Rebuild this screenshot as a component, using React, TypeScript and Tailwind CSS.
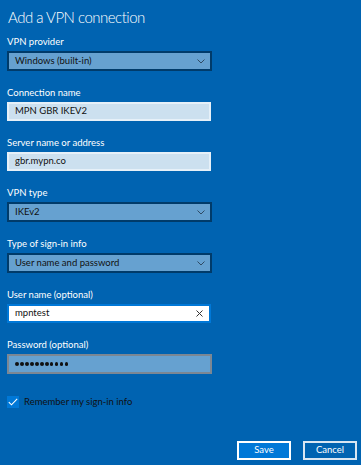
import React from 'react';

const font = { fontFamily: 'Lato, "Noto Sans", sans-serif' };

function Chevron() {
  return (
    <svg width="8" height="5" viewBox="0 0 8 5" className="text-[#2f4a63]">
      <path d="M0.5 0.5L4 4L7.5 0.5" fill="none" stroke="currentColor" strokeWidth="1" />
    </svg>
  );
}

function Label({ children }: { children: React.ReactNode }) {
  return <div className="text-[9.5px] leading-[14px] text-white mb-[2px]">{children}</div>;
}

function Select({ value }: { value: string }) {
  return (
    <div className="w-[205px] h-[20px] flex items-center justify-between pl-[6px] pr-[5px] bg-[#66a1d0] border-2 border-[#003b6a] text-[9.5px] text-[#111]">
      <span>{value}</span>
      <Chevron />
    </div>
  );
}

function TextBox({ value }: { value: string }) {
  return (
    <div className="w-[204px] h-[19px] flex items-center pl-[6px] bg-[#cce0ef] border-2 border-[#e6f0f8] text-[9.5px] text-[#111]">
      {value}
    </div>
  );
}

export default function App() {
  return (
    <div className="w-[361px] h-[465px] bg-[#0063b1] flex flex-col pl-[7px] pr-[4px]" style={font}>
      <h1 className="text-[15px] tracking-[-0.5px] leading-[22px] font-light text-white pl-[1px] pt-[6px] h-[35px]">
        Add a VPN connection
      </h1>

      <div className="flex flex-col gap-[15px]">
        <div>
          <Label>VPN provider</Label>
          <Select value="Windows (built-in)" />
        </div>
        <div>
          <Label>Connection name</Label>
          <TextBox value="MPN GBR IKEV2" />
        </div>
        <div>
          <Label>Server name or address</Label>
          <TextBox value="gbr.mypn.co" />
        </div>
        <div>
          <Label>VPN type</Label>
          <Select value="IKEv2" />
        </div>
        <div>
          <Label>Type of sign-in info</Label>
          <Select value="User name and password" />
        </div>
        <div>
          <Label>User name (optional)</Label>
          <div className="w-[204px] h-[19px] flex items-center justify-between pl-[6px] pr-[6px] bg-white border-2 border-[#0078d7] text-[9.5px] text-[#111]">
            <span>mpntest</span>
            <svg width="7" height="7" viewBox="0 0 7 7" className="text-[#333]">
              <path d="M0.5 0.5L6.5 6.5M6.5 0.5L0.5 6.5" stroke="currentColor" strokeWidth="1" />
            </svg>
          </div>
        </div>
        <div>
          <Label>Password (optional)</Label>
          <div className="w-[205px] h-[20px] flex items-center gap-[1.4px] pl-[6px] bg-[#66a1d0] border-2 border-[#7b8794]">
            {Array.from({ length: 11 }).map((_, i) => (
              <div key={i} className="w-[3.6px] h-[3.6px] rounded-full bg-[#111]" />
            ))}
          </div>
        </div>
      </div>

      <div className="flex items-center gap-[5px] mt-[21px]">
        <div className="w-[12px] h-[12px] bg-[#0078d7] flex items-center justify-center">
          <svg width="10" height="8" viewBox="0 0 10 8">
            <path d="M0.8 4.2L3.5 6.8L9.2 0.8" fill="none" stroke="white" strokeWidth="1.1" />
          </svg>
        </div>
        <span className="text-[9.5px] text-[#111]">Remember my sign-in info</span>
      </div>

      <div className="flex justify-end gap-[12px] mt-auto mb-[5px]">
        <button className="w-[54px] h-[19px] bg-[#0078d7] border-2 border-white text-[9.5px] text-white flex items-center justify-center">
          Save
        </button>
        <button className="w-[54px] h-[19px] bg-[#0063b1] border-2 border-[#d9e6f2] text-[9.5px] text-white flex items-center justify-center">
          Cancel
        </button>
      </div>
    </div>
  );
}
